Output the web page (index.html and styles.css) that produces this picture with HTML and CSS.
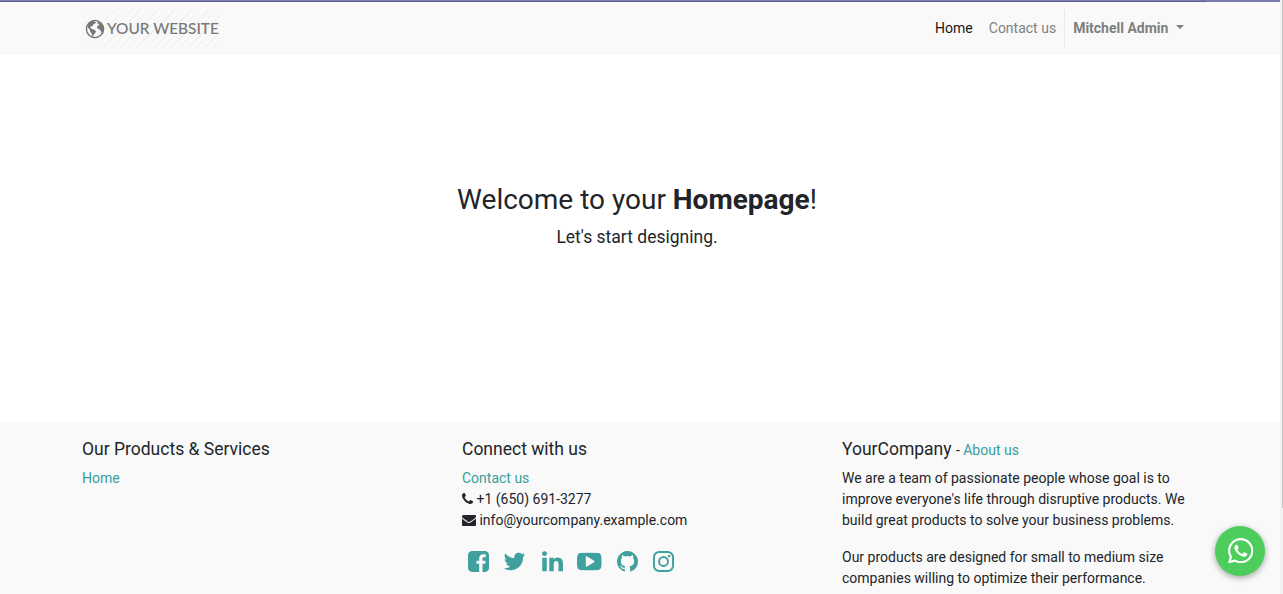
FILE: index.html
```html
<!DOCTYPE html>
<html lang="en">
<head>
<meta charset="utf-8">
<title>Home | My Website</title>
<link rel="stylesheet" href="styles.css">
</head>
<body>
<div class="window">
<div class="page">
  <div class="topbar"><div class="topbar-shade"></div></div>
  <header class="header">
    <div class="container nav">
      <a class="brand">
        <svg class="globe" viewBox="0 0 20 20"><circle cx="10" cy="10" r="8.6" fill="none" stroke="#777" stroke-width="1.400"/><path fill="#777" d="M3 5.400 5 3 8 1.600 9.400 2.600 11 3 10.200 4.400 8.700 5 7.800 6.600 6.200 7.800 5.200 7.600 5.600 9.200 7 10.100 9.200 10.800 11 12.200 10.200 14.200 8.800 15.600 8.200 17.600 7.200 16.800 6.600 14.400 5 12.400 4.800 10.600 2.800 8.400ZM12.200 2.200 16 4.400 18.200 7.600 18.500 11 17.400 13.200 16.400 14 15.800 12 14.800 10.400 12.800 9.800 12 8.200 12.800 6.600 14.400 6 13.600 4.800 12.200 4.200Z"/></svg>
        <span>YOUR WEBSITE</span>
      </a>
      <nav class="menu">
        <a class="link active">Home</a>
        <a class="link">Contact us</a>
        <a class="link user">Mitchell Admin<i class="caret"></i></a>
      </nav>
    </div>
  </header>
  <main class="hero">
    <h1>Welcome to your <b>Homepage</b>!</h1>
    <p>Let's start designing.</p>
  </main>
  <footer class="footer">
    <div class="container columns">
      <section>
        <h5>Our Products &amp; Services</h5>
        <a>Home</a>
      </section>
      <section>
        <h5>Connect with us</h5>
        <ul>
          <li><a>Contact us</a></li>
          <li><svg class="phone" viewBox="192 128 1408 1408"><path d="M1600 1240q0 27-10 70.5t-21 68.500q-21 50-122 106-94 51-186 51-27 0-53-3.500t-57.500-12.500-47-14.500-55.500-20.500-49-18q-98-35-175-83-127-79-264-216t-216-264q-48-77-83-175-3-9-18-49t-20.500-55.500-14.500-47-12.500-57.500-3.500-53q0-92 51-186 56-101 106-122 25-11 68.500-21t70.500-10q14 0 21 3 18 6 53 76 11 19 30 54t35 63.500 31 53.500q3 4 17.500 25t21.500 35.500 7 28.500q0 20-28.500 50t-62 55-62 53-28.500 46q0 9 5 22.500t8.500 20.500 14 24 11.500 19q76 137 174 235t235 174q2 1 19 11.500t24 14 20.500 8.500 22.500 5q18 0 46-28.500t53-62 55-62 50-28.500q14 0 28.500 7t35.500 21.500 25 17.500q25 15 53.500 31t63.500 35 54 30q70 35 76 53 3 7 3 21z"/></svg>+1 (650) 691-3277</li>
          <li><svg class="mail" viewBox="0 256 1792 1408"><path d="M1792 710v794q0 66-47 113t-113 47h-1472q-66 0-113-47t-47-113v-794q44 49 101 87 362 246 497 345 57 42 92.500 65.500t94.500 48 110 24.500h2q51 0 110-24.500t94.500-48 92.500-65.500q170-123 498-345 57-39 100-87zm0-294q0 79-49 151t-122 123q-376 261-468 325-10 7-42.500 31t-54 38.500-52 32.500-57.500 27-50 9h-2q-23 0-50-9t-57.500-27-52-32.500-54-38.500-42.500-31q-91-64-262-182.500t-205-142.500q-62-42-117-115.500t-55-136.500q0-78 41.500-130t118.500-52h1472q65 0 112.500 47t47.500 113z"/></svg>info@yourcompany.example.com</li>
        </ul>
        <div class="social">
          <svg viewBox="128 128 1536 1536"><path d="M1376 128q119 0 203.500 84.500t84.500 203.500v960q0 119-84.500 203.500t-203.500 84.500h-188v-595h199l30-232h-229v-148q0-56 23.500-84t91.500-28l122-1v-207q-63-9-178-9-136 0-217.500 80t-81.500 226v171h-200v232h200v595h-532q-119 0-203.500-84.500t-84.500-203.500v-960q0-119 84.500-203.500t203.500-84.500h960z"/></svg>
          <svg viewBox="128 128 1536 1536"><path d="M1684 408q-67 98-162 167 1 14 1 42 0 130-38 259.500t-115.500 248.500-184.500 210.500-258 146-323 54.500q-271 0-496-145 35 4 78 4 225 0 401-138-105-2-188-64.500t-114-159.500q33 5 61 5 43 0 85-11-112-23-185.500-111.500t-73.500-205.500v-4q68 38 146 41-66-44-105-115t-39-154q0-88 44-163 121 149 294.500 238.500t371.500 99.500q-8-38-8-74 0-134 94.500-228.500t228.500-94.500q140 0 236 102 109-21 205-78-37 115-142 178 93-10 186-50z"/></svg>
          <svg class="linkedin" viewBox="128 128 1536 1536"><path d="M477 625v991h-330v-991h330zm21-306q1 73-50.500 122t-135.500 49h-2q-82 0-132-49t-50-122q0-74 51.500-122.500t134.500-48.500 133 48.500 51 122.500zm1166 729v568h-329v-530q0-105-40.500-164.500t-126.500-59.500q-63 0-105.500 34.500t-63.500 85.500q-11 30-11 81v553h-329q2-399 2-647t-1-296l-1-48h329v144h-2q20-32 41-56t56.500-52 87-43.500 114.500-15.500q171 0 275 113.500t104 332.500z"/></svg>
          <svg class="wide" viewBox="0 128 1792 1536"><path d="M1280 896q0-37-30-54l-512-320q-31-20-65-2-33 18-33 56v640q0 38 33 56 16 8 31 8 20 0 34-10l512-320q30-17 30-54zm512 0q0 96-1 150t-8.500 136.500-22.500 147.500q-16 73-69 123t-124 58q-222 25-671 25t-671-25q-71-8-124.500-58t-69.500-123q-14-65-21.500-147.500t-8.500-136.500-1-150 1-150 8.500-136.500 22.500-147.500q16-73 69-123t124-58q222-25 671-25t671 25q71 8 124.500 58t69.500 123q14 65 21.500 147.500t8.500 136.500 1 150z"/></svg>
          <svg viewBox="128 128 1536 1536"><path d="M896 128q209 0 385.500 103t279.500 279.500 103 385.500q0 251-146.500 451.500t-378.500 277.500q-27 5-40-7t-13-30q0-3 .5-76.500t.5-134.500q0-97-52-142 57-6 102.500-18t94-39 81-66.500 53-105 20.500-150.500q0-119-79-206 37-91-8-204-28-9-81 11t-92 44l-38 24q-93-26-192-26t-192 26q-16-11-42.500-27t-83.500-38.500-85-13.500q-45 113-8 204-79 87-79 206 0 85 20.500 150t52.500 105 80.500 67 94 39 102.500 18q-39 36-49 103-21 10-45 15t-57 5-65.500-21.500-55.500-62.500q-19-32-48.500-52t-49.500-24l-20-3q-21 0-29 4.500t-5 11.500 9 14 13 12l7 5q22 10 43.500 38t31.500 51l10 23q13 38 44 61.500t67 30 69.500 7 55.500-3.500l23-4q0 38 .5 88.500t.5 54.500q0 18-13 30t-40 7q-232-77-378.500-277.500t-146.500-451.500q0-209 103-385.500t279.500-279.500 385.500-103z"/></svg>
          <svg viewBox="0 0 24 24"><rect x="1.100" y="1.100" width="21.800" height="21.800" rx="6" fill="none" stroke="currentColor" stroke-width="2.200"/><circle cx="12" cy="12" r="5.100" fill="none" stroke="currentColor" stroke-width="2.200"/><circle cx="18.300" cy="5.700" r="1.500"/></svg>
        </div>
      </section>
      <section class="about">
        <h5>YourCompany <small>- <a>About us</a></small></h5>
        <p>We are a team of passionate people whose goal is to improve everyone's life through disruptive products. We build great products to solve your business problems.</p>
        <p>Our products are designed for small to medium size companies willing to optimize their performance.</p>
      </section>
    </div>
  </footer>
</div>
<div class="scrollbar"><div class="thumb"></div></div>
<a class="whatsapp"><svg viewBox="0 0 16 16"><path d="M13.601 2.326A7.854 7.854 0 0 0 7.994 0C3.627 0 .068 3.558.064 7.926c0 1.399.366 2.760 1.057 3.965L0 16l4.204-1.102a7.933 7.933 0 0 0 3.790.965h.004c4.368 0 7.926-3.558 7.930-7.930A7.898 7.898 0 0 0 13.600 2.326zM7.994 14.521a6.573 6.573 0 0 1-3.356-.92l-.24-.144-2.494.654.666-2.433-.156-.251a6.560 6.560 0 0 1-1.007-3.505c0-3.626 2.957-6.584 6.591-6.584a6.560 6.560 0 0 1 4.660 1.931 6.557 6.557 0 0 1 1.928 4.660c-.004 3.639-2.961 6.592-6.592 6.592zm3.615-4.934c-.197-.099-1.170-.578-1.353-.646-.182-.065-.315-.099-.445.099-.133.197-.513.646-.627.775-.114.133-.232.148-.43.05-.197-.1-.836-.308-1.592-.985-.59-.525-.985-1.175-1.103-1.372-.114-.198-.011-.304.088-.403.087-.088.197-.232.296-.346.1-.114.133-.198.198-.33.065-.134.034-.248-.015-.347-.05-.099-.445-1.076-.612-1.470-.16-.389-.323-.335-.445-.34-.114-.007-.247-.007-.38-.007a.729.729 0 0 0-.529.247c-.182.198-.691.677-.691 1.654 0 .977.71 1.916.81 2.049.098.133 1.394 2.132 3.383 2.992.47.205.84.326 1.129.418.475.152.904.129 1.246.08.38-.058 1.171-.48 1.338-.943.164-.464.164-.86.114-.992-.049-.133-.182-.232-.38-.33z"/></svg></a>
</div>
</body>
</html>
```
FILE: styles.css
```css
* { box-sizing: border-box; }
body { margin: 0; font: 14px/21px Roboto, sans-serif; color: #212529; background: #fff; }
h1, h5, p, ul { margin: 0; padding: 0; font-weight: 400; }
ul { list-style: none; }
svg { fill: currentColor; }
.window { display: flex; height: 594px; overflow: hidden; position: relative; }
.page { width: 1280px; display: flex; flex-direction: column; }
.container { width: 1140px; margin-left: 67px; padding: 0 15px; }
.topbar { display: flow-root; height: 2px; flex: none; background: #7c7bad; }
.topbar-shade { width: 1206px; height: 1px; margin-top: 1px; background: #5f5e97; }
.header { height: 53px; flex: none; background: #f9f9f9; }
.nav { height: 53px; display: flex; align-items: center; justify-content: space-between; }
.brand { width: 138px; height: 37px; display: flex; align-items: center; padding-left: 3px; color: #777; font: 500 15.4px/20px Lato, sans-serif; white-space: nowrap; background: repeating-linear-gradient(135deg, #f9f9f9 0 5px, #f0f0f0 5px 6px); }
.brand span { padding-bottom: 2px; }
.globe { width: 20px; height: 20px; margin-right: 2px; flex: none; }
.menu { display: flex; height: 37px; align-items: center; margin-right: -0.4px; }
.link { padding: 0 8px; color: #7f7f7f; line-height: 37px; }
.link.active { color: #161616; }
.user { border-left: 1px solid #e6eaef; font-weight: 700; display: flex; align-items: center; }
.caret { border: 4px solid transparent; border-top-color: currentColor; border-bottom: 0; margin: -4px 0 0 8px; }
.hero { height: 367px; flex: none; padding: 128px 6px 0 0; text-align: center; }
.hero h1 { font-size: 28px; line-height: 34px; }
.hero p { font-size: 17.5px; line-height: 26px; margin-top: 7px; }
.footer { flex: 1; background: #f9f9f9; padding-top: 17px; }
.columns { display: grid; grid-template-columns: repeat(3, 350px); column-gap: 30px; }
h5 { font-size: 17.5px; line-height: 21px; height: 21px; margin-bottom: 8px; }
small { font-size: 14px; }
a { color: #35a09d; }
.phone { width: 11px; height: 11px; margin-right: 3.5px; }
.mail { width: 14px; height: 11px; margin-right: 3.4px; vertical-align: -1px; }
.social { display: flex; margin: 20px 0 0 6px; gap: 15.4px; color: #3fa09e; }
.social svg { width: 21px; height: 21px; overflow: visible; }
.social .linkedin { margin: 0 -0.8px 0 0.8px; }
.social .wide { width: 24.5px; }
.about p { margin-bottom: 16px; }
.scrollbar { width: 3px; background: #f1f1f1; padding-left: 2px; }
.thumb { height: 508px; background: #c1c1c1; }
.whatsapp { position: absolute; left: 1215px; top: 526px; width: 50px; height: 50px; border-radius: 50%; background: #4dce5c; color: #fff; display: flex; align-items: center; justify-content: center; box-shadow: 0 2px 6px rgba(0,0,0,.35); }
.whatsapp svg { width: 25.5px; height: 25.5px; margin: 0 0 1px 1px; }
```
